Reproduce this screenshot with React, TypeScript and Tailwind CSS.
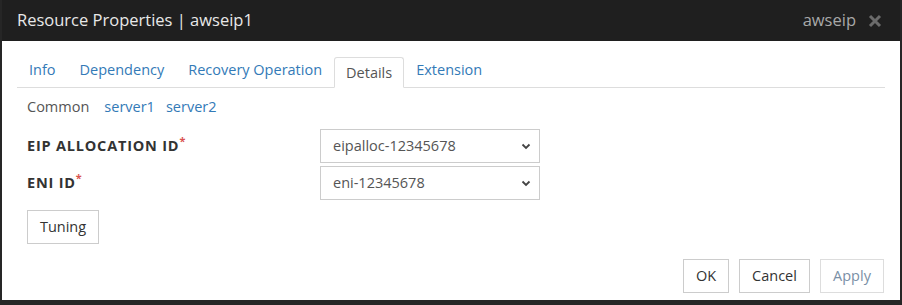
import React from 'react';

const font = { fontFamily: '"Open Sans", "Noto Sans CJK JP", sans-serif' };

const Chevron = () => (
  <svg width="10" height="10" viewBox="0 0 10 10" className="text-[#444]">
    <path d="M1.5 3.5 L5 7 L8.5 3.5" fill="none" stroke="currentColor" strokeWidth="1.8" />
  </svg>
);

const Select = ({ value }: { value: string }) => (
  <div className="flex h-[34px] w-[220px] items-center justify-between border border-[#ccc] pl-[12px] pr-[8px] text-[14.5px] text-[#555]">
    <span>{value}</span>
    <Chevron />
  </div>
);

const App = () => {
  return (
    <div className="flex h-[305px] w-[902px] flex-col bg-[#262626] px-[2px] pb-[5px] text-[14.5px] text-[#333]" style={font}>
      {/* title bar */}
      <div className="flex h-[41px] shrink-0 items-center justify-between bg-[#1f1f1f] pl-[15px] pr-[18px]">
        <span className="text-[16.5px] text-[#e8e8e8]">Resource Properties | awseip1</span>
        <div className="flex items-center gap-[12px]">
          <span className="text-[16.5px] text-[#a8a8a8]">awseip</span>
          <svg width="14" height="14" viewBox="0 0 14 14">
            <path d="M2 2 L12 12 M12 2 L2 12" stroke="#6b6b6b" strokeWidth="3" />
          </svg>
        </div>
      </div>

      {/* body */}
      <div className="flex flex-1 flex-col bg-white px-[15px] pt-[16px]">
        <div className="flex h-[31px] items-end border-b border-[#ddd]">
          <a className="px-[12px] pb-[6px] text-[#337ab7]">Info</a>
          <a className="px-[12px] pb-[6px] text-[#337ab7]">Dependency</a>
          <a className="px-[12px] pb-[6px] text-[#337ab7]">Recovery Operation</a>
          <span className="-mb-px flex h-[31px] items-center rounded-t-[3px] border border-b-white border-[#ddd] px-[11px] text-[#555]">Details</span>
          <a className="px-[12px] pb-[6px] text-[#337ab7]">Extension</a>
        </div>

        <div className="mt-[8px] flex gap-[15px] pl-[10px]">
          <span className="text-[#555]">Common</span>
          <div className="flex gap-[11px] text-[#337ab7]">
            <span>server1</span>
            <span>server2</span>
          </div>
        </div>

        <div className="mt-[11px] flex flex-col gap-[3px] pl-[10px]">
          <div className="flex items-center">
            <span className="w-[293px] font-bold tracking-[0.8px] text-[#333]">
              EIP ALLOCATION ID<sup className="text-[#d9534f]">*</sup>
            </span>
            <Select value="eipalloc-12345678" />
          </div>
          <div className="flex items-center">
            <span className="w-[293px] font-bold tracking-[0.8px] text-[#333]">
              ENI ID<sup className="text-[#d9534f]">*</sup>
            </span>
            <Select value="eni-12345678" />
          </div>
        </div>

        <div className="mt-[10px] pl-[10px]">
          <button className="h-[34px] w-[72px] border border-[#ccc] bg-white text-[#333]">Tuning</button>
        </div>

        <div className="mt-[15px] flex justify-end gap-[10px] pr-[1px]">
          <button className="h-[34px] w-[46px] border border-[#ccc] bg-white text-[#333]">OK</button>
          <button className="h-[34px] w-[71px] border border-[#ccc] bg-white text-[#333]">Cancel</button>
          <button className="h-[34px] w-[64px] border border-[#ddd] bg-white text-[#7a8fa6]">Apply</button>
        </div>
      </div>
    </div>
  );
};

export default App;
